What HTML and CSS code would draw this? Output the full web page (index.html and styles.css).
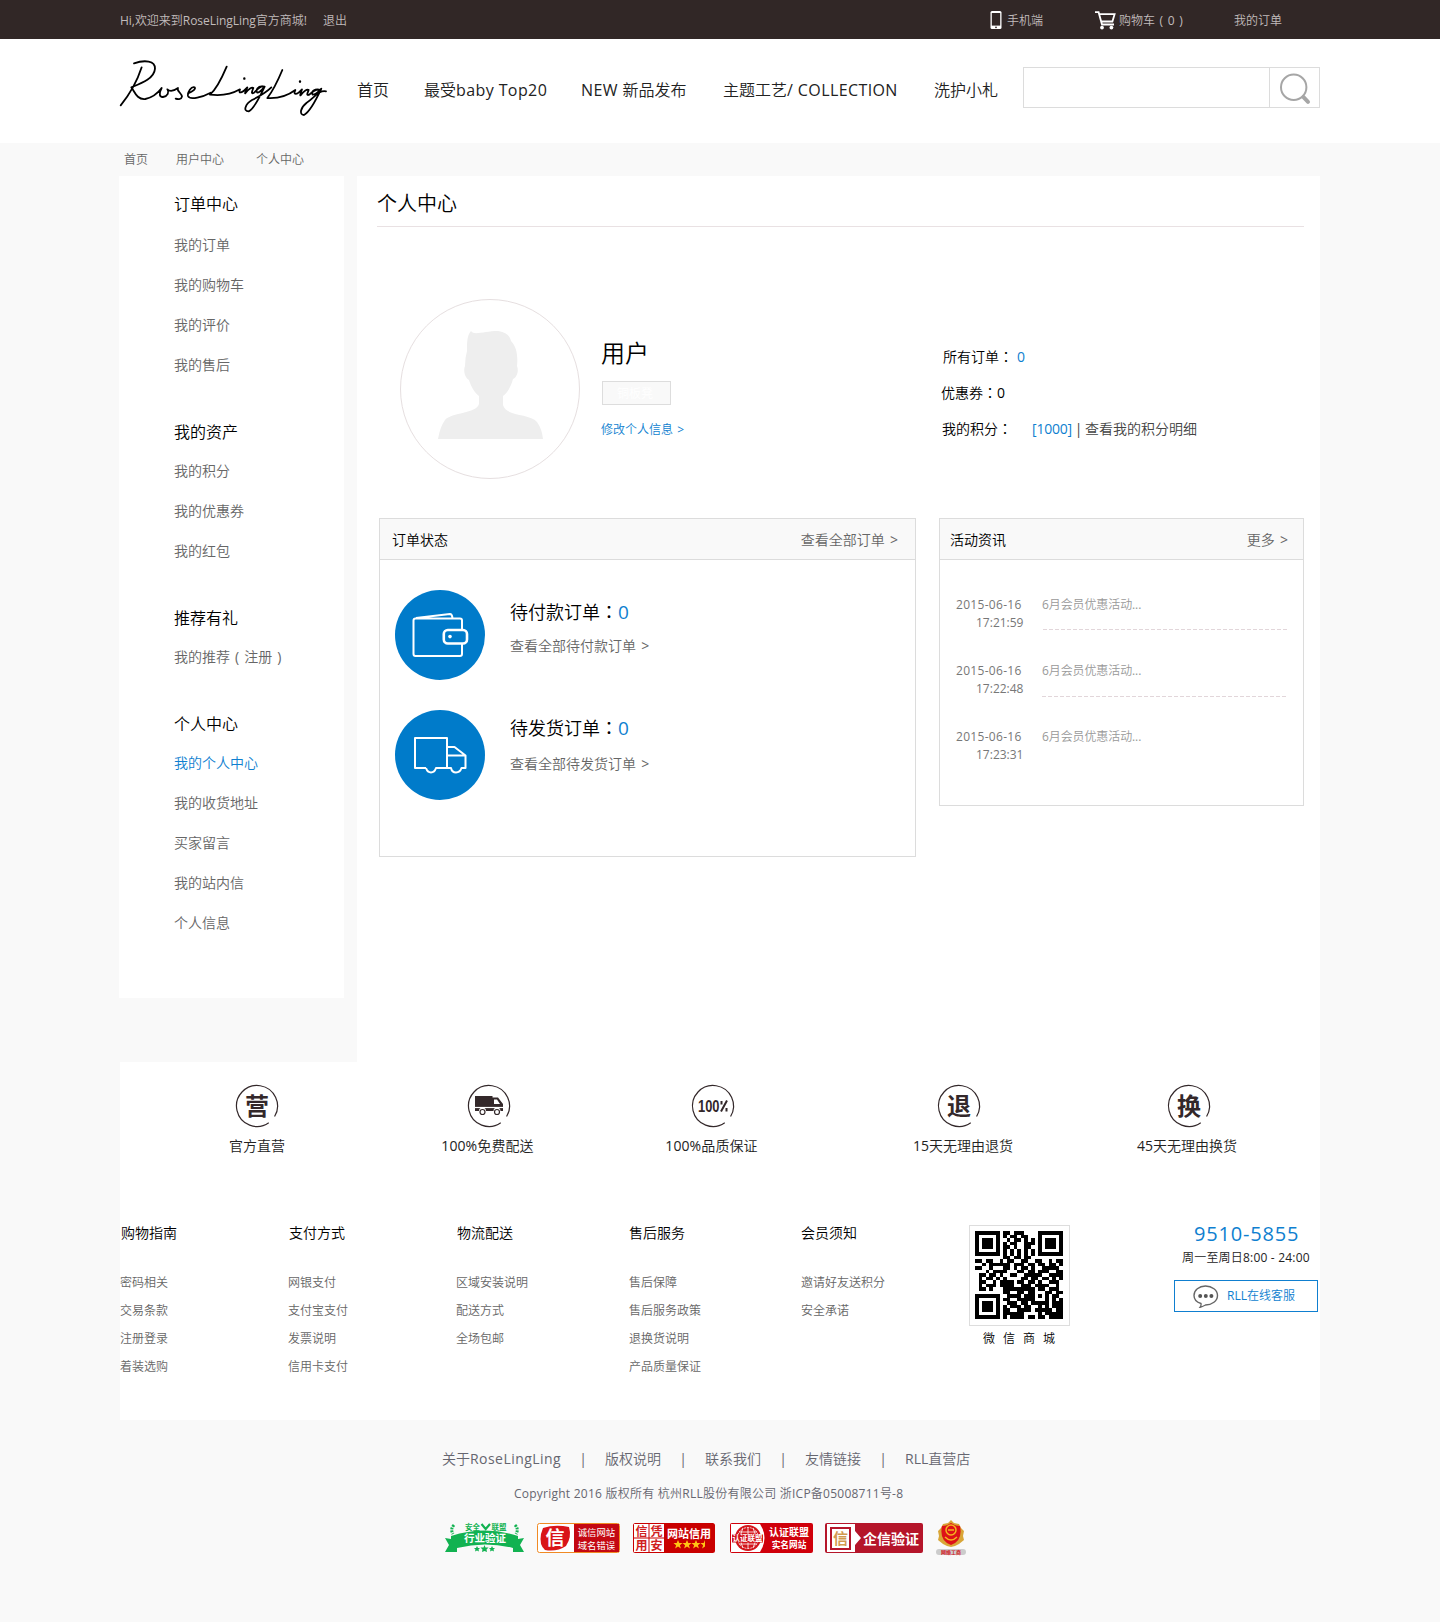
FILE: index.html
```html
<!DOCTYPE html>
<html lang="zh-CN">
<head>
<meta charset="utf-8">
<title>RoseLingLing 个人中心</title>
<link rel="stylesheet" href="styles.css">
</head>
<body>
<div class="topbar">
  <div class="wrap topbar-in">
    <span class="hello">Hi,欢迎来到RoseLingLing官方商城!</span>
    <a class="logout">退出</a>
    <a class="top-phone"><svg width="12" height="18" viewBox="0 0 12 18"><rect x=".5" y="0" width="11" height="18" rx="1.5" fill="#fff"/><rect x="1.8" y="2" width="8.4" height="12.6" fill="#312726"/><circle cx="6" cy="16.3" r=".9" fill="#312726"/></svg>手机端</a>
    <a class="top-cart"><svg width="21" height="19" viewBox="0 0 21 19" fill="none" stroke="#fff" stroke-width="1.8"><path d="M0 1.2h3.6l3.4 12.3h12M4.2 3.2h15.4l-2.2 7.3H6.4"/><circle cx="7" cy="16.6" r="1.9" fill="#fff" stroke="none"/><circle cx="16.4" cy="16.6" r="1.9" fill="#fff" stroke="none"/></svg>购物车 ( 0 )</a>
    <a class="top-orders">我的订单</a>
  </div>
</div>
<header class="header">
  <div class="wrap header-in">
    <svg class="logo" width="208" height="58" viewBox="60 180 624 174" fill="none" stroke="#000" stroke-width="5.4" stroke-linecap="round" stroke-linejoin="round">
      <path d="M125 202C114 236 100 270 62 316M102 190C134 179 166 182 165 206C163 236 124 250 94 262C104 274 110 300 136 297C160 292 176 276 185 264C176 280 178 292 189 291C204 288 208 276 202 268C210 276 220 274 234 264C228 272 246 280 246 290C244 300 232 298 227 296"/>
      <path d="M264 280C280 274 288 266 284 262C274 258 262 276 264 288C270 302 310 290 332 278M380 200C364 238 346 270 330 284C362 288 396 282 420 268C414 282 426 280 442 262C436 276 434 282 436 280C446 266 456 260 460 264C456 274 452 284 462 278C472 268 482 256 492 260M490 260C474 256 466 272 472 278C480 278 488 266 494 260C482 284 464 326 446 334C428 334 436 312 456 300C480 288 500 276 514 262"/>
      <path d="M547 210C532 246 516 276 502 294C534 296 562 288 586 270C578 286 590 286 606 268C600 282 600 288 602 286C612 272 622 266 626 270C622 280 618 288 628 284C638 274 648 266 662 270C644 264 632 276 638 284C648 284 656 274 664 266C650 296 630 336 612 345C596 344 602 322 620 308C644 294 654 270 678 274"/>
      <path d="M433 235v1M600 244v1" stroke-width="7"/>
    </svg>
    <nav class="nav"><a>首页</a><a>最受<span>baby Top20</span></a><a><span>NEW </span>新品发布</a><a>主题工艺<span>/ COLLECTION</span></a><a>洗护小札</a></nav>
    <div class="search"><div class="search-field"></div><div class="search-btn"><svg width="32" height="32" viewBox="0 0 32 32" fill="none" stroke="#a6a6a6"><circle cx="14.7" cy="14.2" r="12.7" stroke-width="2"/><path d="M24.5 24.2l4.5 4.6" stroke-width="4" stroke-linecap="round"/></svg></div></div>
  </div>
</header>
<div class="wrap crumbs"><a>首页</a><a>用户中心</a><a>个人中心</a></div>
<div class="wrap body">
  <aside class="side">
    <h3>订单中心</h3><a>我的订单</a><a>我的购物车</a><a>我的评价</a><a>我的售后</a>
    <h3>我的资产</h3><a>我的积分</a><a>我的优惠券</a><a>我的红包</a>
    <h3>推荐有礼</h3><a class="invite">我的推荐 ( 注册 )</a>
    <h3>个人中心</h3><a class="on">我的个人中心</a><a>我的收货地址</a><a>买家留言</a><a>我的站内信</a><a>个人信息</a>
  </aside>
  <main class="main">
    <h1>个人中心</h1>
    <section class="profile">
      <div class="avatar"><svg width="106" height="108" viewBox="0 0 106 108"><path fill="#eee" d="M33 0c3 5 14 0 27 0c8 1 12 5 13 10c6 6 7 16 6 25c2 5 0 11-4 13c-2 8-6 14-10 17v9c3 12 27 8 34 17q5 7 6 17H0q2-12 7-19c7-8 31-6 34-16V65c-4-3-8-9-10-16c-4-2-6-9-4-14q0-8 2-15c0-8 0-16 4-20z"/></svg></div>
      <div class="who"><h2>用户</h2><span class="level">铜板凳</span><a class="edit more">修改个人信息&nbsp; &gt;</a></div>
      <div class="stats">
        <div class="s1"><span>所有订单<em lang="zh-Hant">：</em></span><b>0</b></div>
        <div class="s2"><span>优惠券<em lang="zh-Hant">：</em>0</span></div>
        <div class="s3"><span>我的积分<em lang="zh-Hant">：</em></span><b>[1000]</b><i>|</i><a>查看我的积分明细</a></div>
      </div>
    </section>
    <section class="cards">
      <div class="card orders">
        <div class="card-head"><h4>订单状态</h4><a class="more">查看全部订单&nbsp; &gt;</a></div>
        <div class="order">
          <svg width="90" height="90" viewBox="0 0 90 90" fill="none" stroke="#fff" stroke-width="2" stroke-linejoin="round"><circle cx="45" cy="45" r="45" fill="#007bca" stroke="none"/><path d="M67 39v-8.500q0-2-2-2H20.500q-2 0-2 2V64q0 2 2 2H65q2 0 2-2V54M21 28l34-4q2 0 2.500 4"/><rect x="48.800" y="40" width="23.200" height="13.500" rx="4" stroke-width="2.600"/><circle cx="55" cy="46.600" r="1.800" fill="#fff" stroke="none"/></svg>
          <div class="order-text t1"><h5>待付款订单<em lang="zh-Hant">：</em><b>0</b></h5><a class="more">查看全部待付款订单&nbsp; &gt;</a></div>
        </div>
        <div class="order">
          <svg width="90" height="90" viewBox="0 0 90 90" fill="none" stroke="#fff" stroke-width="2" stroke-linejoin="round"><circle cx="45" cy="45" r="45" fill="#007bca" stroke="none"/><path d="M31 58H20V28h32v30H41q-1.500 4.500-5 4.500T31 58M52 37h7.500L70.500 45.500V58H66.500q-1.500 4.500-5.500 4.500T56 58H52M53 45.500h17"/></svg>
          <div class="order-text t2"><h5>待发货订单<em lang="zh-Hant">：</em><b>0</b></h5><a class="more">查看全部待发货订单&nbsp; &gt;</a></div>
        </div>
      </div>
      <div class="card news">
        <div class="card-head"><h4>活动资讯</h4><a class="more">更多&nbsp; &gt;</a></div>
        <div class="news-item"><div class="date"><span>2015-06-16</span><span class="time">17:21:59</span></div><div class="msg line1">6月会员优惠活动...</div></div>
        <div class="news-item"><div class="date"><span>2015-06-16</span><span class="time">17:22:48</span></div><div class="msg line2">6月会员优惠活动...</div></div>
        <div class="news-item"><div class="date"><span>2015-06-16</span><span class="time">17:23:31</span></div><div class="msg">6月会员优惠活动...</div></div>
      </div>
    </section>
  </main>
</div>
<div class="wrap foot">
  <div class="features">
    <div><svg class="ring" viewBox="0 0 42 42"><path d="M38.570 31.560A20.500 20.500 0 1 0 32.760 37.790"/><text x="21" y="30" font-size="24">营</text></svg><p>官方直营</p></div>
    <div><svg class="ring" viewBox="0 0 42 42"><path d="M38.570 31.560A20.500 20.500 0 1 0 32.760 37.790"/><path class="fill" d="M7 11h17.500v1.500h5.500l5 6.500v7h-2.500a3.500 3.500 0 0 0-7 0H18a3.500 3.500 0 0 0-7 0H7zM26 14.500v4.500h6l-3-4.500z"/><path d="M7 22.500h28" stroke="#fff"/><circle cx="14.500" cy="27" r="2.500"/><circle cx="29" cy="27" r="2.500"/></svg><p>100%免费配送</p></div>
    <div><svg class="ring" viewBox="0 0 42 42"><path d="M38.570 31.560A20.500 20.500 0 1 0 32.760 37.790"/><text class="pct" x="6" y="26.500" font-size="16" textLength="21.500" lengthAdjust="spacingAndGlyphs">100</text><path d="M29.500 16v3.500M34.500 23v3.500M35 15.500l-6 11" stroke-width="2"/></svg><p>100%品质保证</p></div>
    <div><svg class="ring" viewBox="0 0 42 42"><path d="M38.570 31.560A20.500 20.500 0 1 0 32.760 37.790"/><text x="21" y="30" font-size="24">退</text></svg><p>15天无理由退货</p></div>
    <div><svg class="ring" viewBox="0 0 42 42"><path d="M38.570 31.560A20.500 20.500 0 1 0 32.760 37.790"/><text x="21" y="30" font-size="24">换</text></svg><p>45天无理由换货</p></div>
  </div>
  <div class="help">
    <div class="col"><h6>购物指南</h6><a>密码相关</a><a>交易条款</a><a>注册登录</a><a>着装选购</a></div>
    <div class="col"><h6>支付方式</h6><a>网银支付</a><a>支付宝支付</a><a>发票说明</a><a>信用卡支付</a></div>
    <div class="col"><h6>物流配送</h6><a>区域安装说明</a><a>配送方式</a><a>全场包邮</a></div>
    <div class="col"><h6>售后服务</h6><a>售后保障</a><a>售后服务政策</a><a>退换货说明</a><a>产品质量保证</a></div>
    <div class="col"><h6>会员须知</h6><a>邀请好友送积分</a><a>安全承诺</a></div>
    <div class="qr"><div class="qr-box"><svg id="qr" width="88" height="88" viewBox="0 0 25 25" shape-rendering="crispEdges"></svg></div><p>微信商城</p></div>
    <div class="service"><strong>9510-5855</strong><p>周一至周日8:00 - 24:00</p><a><svg width="26" height="24" viewBox="0 0 26 24" fill="none" stroke="#666" stroke-width="1.400"><path d="M8 18.500C3 17 1 14 1 10.500C1 5 6 1 12.500 1S24.500 5 24.500 10.500S19 20 12.500 20Q9 22 7.200 22.200Q8.500 20.500 8 18.500z"/><g fill="#555" stroke="none"><circle cx="7.200" cy="11" r="2"/><circle cx="12.800" cy="11" r="2"/><circle cx="18.400" cy="11" r="2"/></g></svg>RLL在线客服</a></div>
  </div>
</div>
<footer class="bottom">
  <div class="links"><a class="about">关于<span>RoseLingLing</span></a><i>|</i><a>版权说明</a><i>|</i><a>联系我们</a><i>|</i><a>友情链接</a><i>|</i><a>RLL直营店</a></div>
  <p class="copy">Copyright 2016 版权所有 杭州RLL股份有限公司 浙ICP备05008711号-8</p>
  <div class="badges">
    <svg width="80" height="32" viewBox="0 0 80 32"><path fill="#12b251" d="M0 16l6 1v-3Q40 3 73 14v3l6-1-4 7 4 7H68v-4Q40 19 12 26v4H0l4-7z"/><path d="M9 3q-4 4-1 9M70 3q4 4 1 9" fill="none" stroke="#12b251" stroke-width="3" stroke-dasharray="2 1"/><text x="27.500" y="7.500" font-size="7.500" fill="#12b251">安全</text><text x="54" y="7.500" font-size="7.500" fill="#12b251">联盟</text><path d="M36.500 2l4.200 5L45 2" fill="none" stroke="#12b251" stroke-width="2.200"/><text x="40" y="19.500" font-size="10.500" fill="#fff">行业验证</text><path fill="#12b251" d="M32 24l1 2h2l-1.500 1.500.5 2-2-1-2 1 .5-2L29 26h2zM39.500 23l1 2.500h3l-2 2 .5 2.500-2.500-1-2.500 1 .5-2.500-2-2h3zM47 24l1 2h2l-1.500 1.500.5 2-2-1-2 1 .5-2L44 26h2z"/></svg>
    <svg width="83" height="30" viewBox="0 0 83 30"><rect x=".5" y=".5" width="82" height="29" rx="2" fill="#fff" stroke="#f08a24"/><path d="M37 1h45v28H37z" fill="#c40812"/><path d="M6 5q12-4 26-1q3 10-3 19q-9 6-21 4Q2 22 4 11z" fill="#d91419"/><text x="18" y="22" font-size="19" fill="#fff">信</text><text class="thin" x="59.500" y="13" font-size="9.400" fill="#fff">诚信网站</text><text class="thin" x="59.500" y="25.500" font-size="9.400" fill="#fff">域名错误</text></svg>
    <svg width="82" height="30" viewBox="0 0 82 30"><rect width="82" height="30" rx="2.500" fill="#c90000"/><path d="M1 1h30v28H1z" fill="#fff"/><path d="M16 1v28M1 15h30" stroke="#c90000"/><g fill="#d02020" font-size="12"><text x="8.500" y="12.500">信</text><text x="23.500" y="12.500">凭</text><text x="8.500" y="27">用</text><text x="23.500" y="27">安</text></g><text x="56" y="14.500" font-size="11" fill="#fff">网站信用</text><path fill="#ffc515" d="M45 17l1.300 3h3.200l-2.600 2.200 1 3.300-2.900-2-2.900 2 1-3.300-2.600-2.200h3.200zM54 17l1.300 3h3.200l-2.600 2.200 1 3.300-2.900-2-2.900 2 1-3.300-2.600-2.200h3.200zM63 17l1.300 3h3.200l-2.600 2.200 1 3.300-2.900-2-2.900 2 1-3.300-2.600-2.200h3.200zM72 17v6.500l-2.900 2 1-3.300-2.600-2.200h3.200z"/></svg>
    <svg width="83" height="30" viewBox="0 0 83 30"><rect width="83" height="30" rx="2" fill="#d0000b"/><path d="M1 1h29q9 14 0 28H1z" fill="#fff"/><circle cx="18" cy="15" r="13" fill="#d3151b"/><g fill="none" stroke="#fff" stroke-width=".8"><circle cx="18" cy="15" r="10.500" stroke-dasharray="2 1"/><path d="M18 4v22M9 9h18M9 21h18M13 5q-5 10 0 20M23 5q5 10 0 20"/></g><path d="M2 11.500h31v8H2z" fill="#d3151b"/><text x="17.500" y="18.200" font-size="7.500" fill="#fff">认证联盟</text><text x="59" y="13" font-size="10" fill="#fff">认证联盟</text><text x="59" y="25" font-size="8.700" fill="#fff">实名网站</text></svg>
    <svg width="98" height="30" viewBox="0 0 98 30"><rect width="98" height="30" rx="2" fill="#b5152a"/><path d="M2 1h28v7l6 7-6 7v7H2z" fill="#fff"/><path d="M6 5h19v21H6z" fill="none" stroke="#b5152a" stroke-width="2"/><text x="15.500" y="21" font-size="15" fill="#d29a51">信</text><text x="66" y="20.500" font-size="14" fill="#fff">企信验证</text></svg>
    <svg width="30" height="35" viewBox="0 0 30 35"><path d="M15 0l3 3 5 1 2 4 3 3-1 5 1 4-5 4-4 2-4 1-4-1-4-2-5-4 1-4-1-5 3-3 2-4 5-1z" fill="#d9a637"/><path d="M15 3q4 3 9 3q3 15-9 19Q3 21 6 6q5 0 9-3z" fill="#dd1118"/><circle cx="15" cy="10" r="5" fill="none" stroke="#f5b51f" stroke-width="1.500"/><path d="M9 17q6 6 12 0M12 10h6" fill="none" stroke="#f5b51f" stroke-width="1.500"/><rect y="29" width="30" height="6" rx="3" fill="#ccc"/><text x="15" y="34" font-size="5" fill="#d3151b">网络工商</text></svg>
  </div>
</footer>
<script src="qr.js"></script>
</body>
</html>
```
FILE: styles.css
```css
* { box-sizing: border-box; }
body { margin: 0; background: #f9f9f9; color: #000; font: 14px/20px "Open Sans", "Noto Sans CJK SC DemiLight", "Noto Sans CJK SC", sans-serif; }
h1, h2, h3, h4, h5, h6, p { margin: 0; font-weight: 400; }
b, i, em { font-weight: 400; font-style: normal; }
em { font-family: "Noto Sans CJK TC", sans-serif; line-height: 1; }
svg { display: block; flex: none; overflow: visible; }
a { white-space: nowrap; }
.more { word-spacing: -1px; }
.wrap { width: 1200px; margin: 0 auto; }

.topbar { height: 39px; background: #312726; color: #c1bcbc; font-size: 12px; }
.topbar-in { display: flex; height: 39px; line-height: 41px; white-space: nowrap; }
.hello { width: 203px; letter-spacing: -.03px; }
.logout { width: 667px; }
.top-phone, .top-cart { display: flex; gap: 5px; }
.top-phone { width: 105px; }
.top-cart { width: 139px; gap: 3px; word-spacing: 1.5px; }
.top-phone svg, .top-cart svg { margin-top: 11px; }

.header { height: 104px; background: #fff; }
.header-in { display: flex; }
.logo { margin: 21px 29px 0 0; }
.nav { display: flex; width: 666px; padding-top: 39px; font-size: 16px; line-height: 24px; color: #222; }
.nav span { letter-spacing: .4px; }
.nav a:nth-child(1) { width: 67px; }
.nav a:nth-child(2) { width: 157px; }
.nav a:nth-child(3) { width: 142px; }
.nav a:nth-child(4) { width: 211px; }
.search { display: flex; width: 297px; height: 41px; margin-top: 28px; border: 1px solid #dcdcdc; }
.search-field { width: 246px; border-right: 1px solid #dcdcdc; }
.search-btn { padding: 5px 0 0 9px; }

.crumbs { display: flex; height: 33px; padding-left: 4px; font-size: 12px; line-height: 33px; color: #666; }
.crumbs a:nth-child(1) { width: 52px; }
.crumbs a:nth-child(2) { width: 80px; }

.body { display: flex; justify-content: space-between; align-items: flex-start; }
.side { width: 225px; height: 822px; margin-left: -1px; padding: 9px 0 0 55px; background: #fff; }
.side h3 { margin-top: 28px; font-size: 16px; line-height: 38px; }
.side h3:first-child { margin-top: 0; padding-bottom: 2px; }
.side a { display: block; line-height: 40px; color: #666; }
.side a.invite { word-spacing: 1.4px; }
.side a.on { color: #0f7fd0; }
.main { width: 963px; height: 886px; padding: 0 16px 0 20px; background: #fff; }
.main h1 { height: 51px; border-bottom: 1px solid #e9e1e3; font-size: 20px; line-height: 56px; }

.profile { display: flex; margin-top: 72px; height: 219px; padding-left: 23px; }
.avatar { width: 180px; height: 180px; padding: 31px 0 0 37px; border: 1px solid #e6dfe0; border-radius: 50%; }
.who { width: 361px; padding: 36px 0 0 21px; }
.who h2 { font-size: 24px; line-height: 36px; }
.level { display: block; width: 69px; height: 24px; margin: 10px 0 0 1px; border: 1px solid #ddd; background: #f9f9f9; color: #fff; font-size: 12px; line-height: 23px; padding-left: 14px; }
.edit { display: block; margin-top: 15px; font-size: 12px; color: #0f7fd0; }
.stats { padding-top: 40px; line-height: 36px; }
.stats div { display: flex; white-space: nowrap; }
.stats b { color: #0f7fd0; }
.s1 { padding-left: 2px; }
.s1 span { width: 74px; }
.s3 { padding-left: 1px; }
.s3 span { width: 90px; }
.s3 b { letter-spacing: -.2px; }
.s3 i { width: 13px; text-align: center; color: #444; }
.s3 a { color: #444; }

.cards { display: flex; justify-content: space-between; align-items: flex-start; padding-left: 2px; }
.card { border: 1px solid #dcdcdc; }
.card-head { display: flex; justify-content: space-between; height: 41px; border-bottom: 1px solid #dcdcdc; background: #f9f9f9; line-height: 42px; }
.card-head h4 { font-size: 14px; line-height: 42px; }
.card-head a { color: #666; }
.orders { width: 537px; height: 339px; }
.orders .card-head { padding: 0 17px 0 12px; margin-bottom: 30px; }
.order { display: flex; gap: 25px; height: 120px; padding-left: 15px; }
.order-text h5 { font-size: 18px; line-height: 28px; }
.order-text b { color: #0f7fd0; font-size: 19px; }
.order-text a { display: block; line-height: 24px; color: #666; }
.t1 { padding-top: 8px; }
.t1 a { margin-top: 8px; }
.t2 { padding-top: 4px; }
.t2 a { margin-top: 10px; }
.news { width: 365px; height: 288px; }
.news .card-head { padding: 0 15px 0 10px; margin-bottom: 36px; }
.news-item { display: flex; height: 66px; padding: 0 15px 0 16px; font-size: 12px; line-height: 18px; color: #777; }
.date { width: 86px; }
.date span { display: block; letter-spacing: .3px; }
.date .time { padding-left: 20px; letter-spacing: 0; }
.msg { width: 246px; color: #999; letter-spacing: -.1px; }
.line1, .line2 { background: repeating-linear-gradient(90deg, #e2d6da 0 4px, transparent 4px 6px) no-repeat 1px 33px / 245px 1px; }
.line2 { background-position: 0 34px; }

.foot { height: 358px; background: #fff; color: #222; }
.features { display: grid; grid-template-columns: 274px 190px 258px 234px 226px; height: 162px; padding-top: 23px; line-height: 38px; text-align: center; }
.features .ring { width: 42px; height: 42px; margin: 0 auto; fill: none; stroke: #33282a; stroke-width: 1.2; }
.features p { white-space: nowrap; }
.features div:nth-child(2) p, .features div:nth-child(3) p { margin-left: -3px; letter-spacing: .1px; }
.features div:nth-child(4) p { margin-left: 8px; }
.features div:nth-child(5) p { margin-left: -4px; }
.ring text { fill: #33282a; stroke: none; font-weight: 700; text-anchor: middle; font-family: "Noto Sans CJK SC", sans-serif; }
.ring text.pct { text-anchor: start; font-family: "Liberation Sans", sans-serif; }
.ring .fill { fill: #33282a; fill-rule: evenodd; stroke: none; }
.help { display: grid; grid-template-columns: 168px 168px 173px 172px 168px 205px 144px; }
.col h6 { padding-left: 1px; margin: -1px 0 26px; font-size: 14px; line-height: 20px; color: #000; }
.col:nth-child(n+4) h6 { padding-left: 0; }
.col a { display: block; font-size: 12px; line-height: 28px; color: #666; }
.qr { margin-top: 1px; }
.qr-box { width: 101px; height: 101px; padding: 5px; border: 1px solid #ddd; }
.qr p { padding-left: 14px; font-size: 12px; line-height: 25px; letter-spacing: 8px; color: #000; }
.service { margin-top: -1px; }
.service strong { display: block; padding-left: 20px; font-size: 20px; line-height: 22px; font-weight: 400; letter-spacing: .8px; color: #0f7fd0; }
.service p { padding-left: 8px; margin-top: 2px; font-size: 12px; line-height: 22px; letter-spacing: .2px; white-space: nowrap; }
.service a { display: flex; gap: 8px; height: 32px; margin-top: 11px; padding: 4px 0 0 18px; border: 1px solid #0f7fd0; font-size: 12px; line-height: 22px; color: #0f7fd0; }

.bottom { height: 202px; padding: 29px 0 0 442px; color: #666670; }
.links { display: flex; line-height: 20px; }
.links span { letter-spacing: .45px; }
.links a { width: 56px; }
.links .about { width: 119px; }
.links i { width: 44px; text-align: center; }
.copy { padding: 15px 0 0 72px; font-size: 12px; line-height: 20px; letter-spacing: .24px; white-space: nowrap; }
.badges { display: flex; padding: 19px 0 0 3px; }
.badges svg { margin-top: -1px; }
.badges svg:nth-child(n+2) { margin: 0 0 0 13px; }
.badges svg:nth-child(2) { margin-left: 12px; }
.badges svg:nth-child(4) { margin-left: 15px; }
.badges svg:nth-child(5) { margin-left: 12px; }
.badges svg:nth-child(6) { margin-top: -3px; }
.badges text { text-anchor: middle; font-weight: 700; font-family: "Noto Sans CJK SC", sans-serif; }
.badges .thin { font-weight: 400; }
```
FILE: qr.js
```js
const rows = [
  "1111111011011100001111111",
  "1000001010110110001000001",
  "1011101001011010101011101",
  "1011101010110011101011101",
  "1011101011010011001011101",
  "1000001010101010101000001",
  "1111111010101010101111111",
  "0000000011011011000000000",
  "1101100101100110011001011",
  "0010111111011101101101101",
  "1100100011010110100111110",
  "0001011110001101101110011",
  "0110110100110011111001111",
  "0101101010000110110110101",
  "0110010111101101101001110",
  "0101110111100111011110010",
  "0110100011111111101101110",
  "0000000011001101100011011",
  "1111111001111011101010110",
  "1000001011001111100010101",
  "1011101001110110111110111",
  "1011101010111011001010111",
  "1011101011001111011111011",
  "1000001011111100001011111",
  "1111111010111101101101111"
];
let d = "";
rows.forEach((row, y) => {
  for (const run of row.matchAll(/1+/g)) d += `M${run.index} ${y}h${run[0].length}v1h-${run[0].length}z`;
});
const path = document.createElementNS("http://www.w3.org/2000/svg", "path");
path.setAttribute("d", d);
document.getElementById("qr").appendChild(path);
```
